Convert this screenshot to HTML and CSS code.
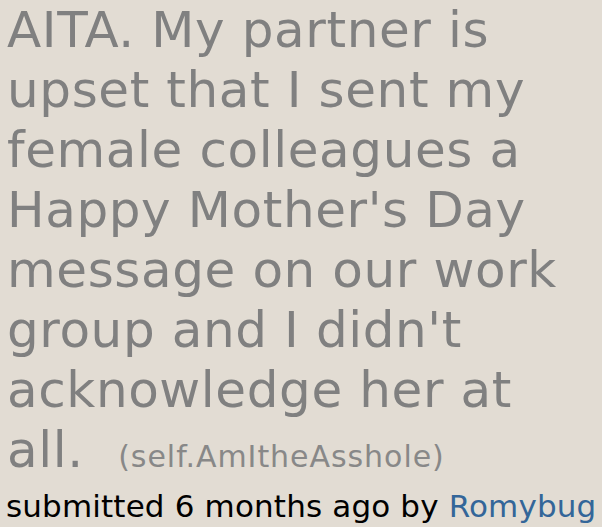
FILE: index.html
```html
<!DOCTYPE html>
<html>
<head>
<meta charset="utf-8">
<link rel="stylesheet" href="styles.css">
</head>
<body>
<div class="post">
  <p class="title"><a class="title-link">AITA. My partner is upset that I sent my female colleagues a Happy Mother's Day message on our work group and I didn't acknowledge her at all.</a> <span class="domain">(self.AmItheAsshole)</span></p>
  <p class="tagline">submitted 6 months ago by <a class="author">Romybug</a></p>
</div>
</body>
</html>
```
FILE: styles.css
```css
html, body {
  margin: 0;
  padding: 0;
  background: #e2dcd3;
}
body {
  font-family: "DejaVu Sans", Verdana, sans-serif;
}
.post {
  padding: 0 4px 0 7px;
}
.title {
  margin: 0;
  font-size: 50px;
  line-height: 60px;
  letter-spacing: 0.6px;
  color: #808080;
}
.domain {
  font-size: 30px;
  letter-spacing: 0.95px;
  color: #888888;
  margin-left: 18px;
}
.tagline {
  margin: 0 0 0 -1px;
  font-size: 31px;
  line-height: 38px;
  letter-spacing: 0.15px;
  white-space: nowrap;
  color: #000;
}
.author {
  color: #336699;
}
```
